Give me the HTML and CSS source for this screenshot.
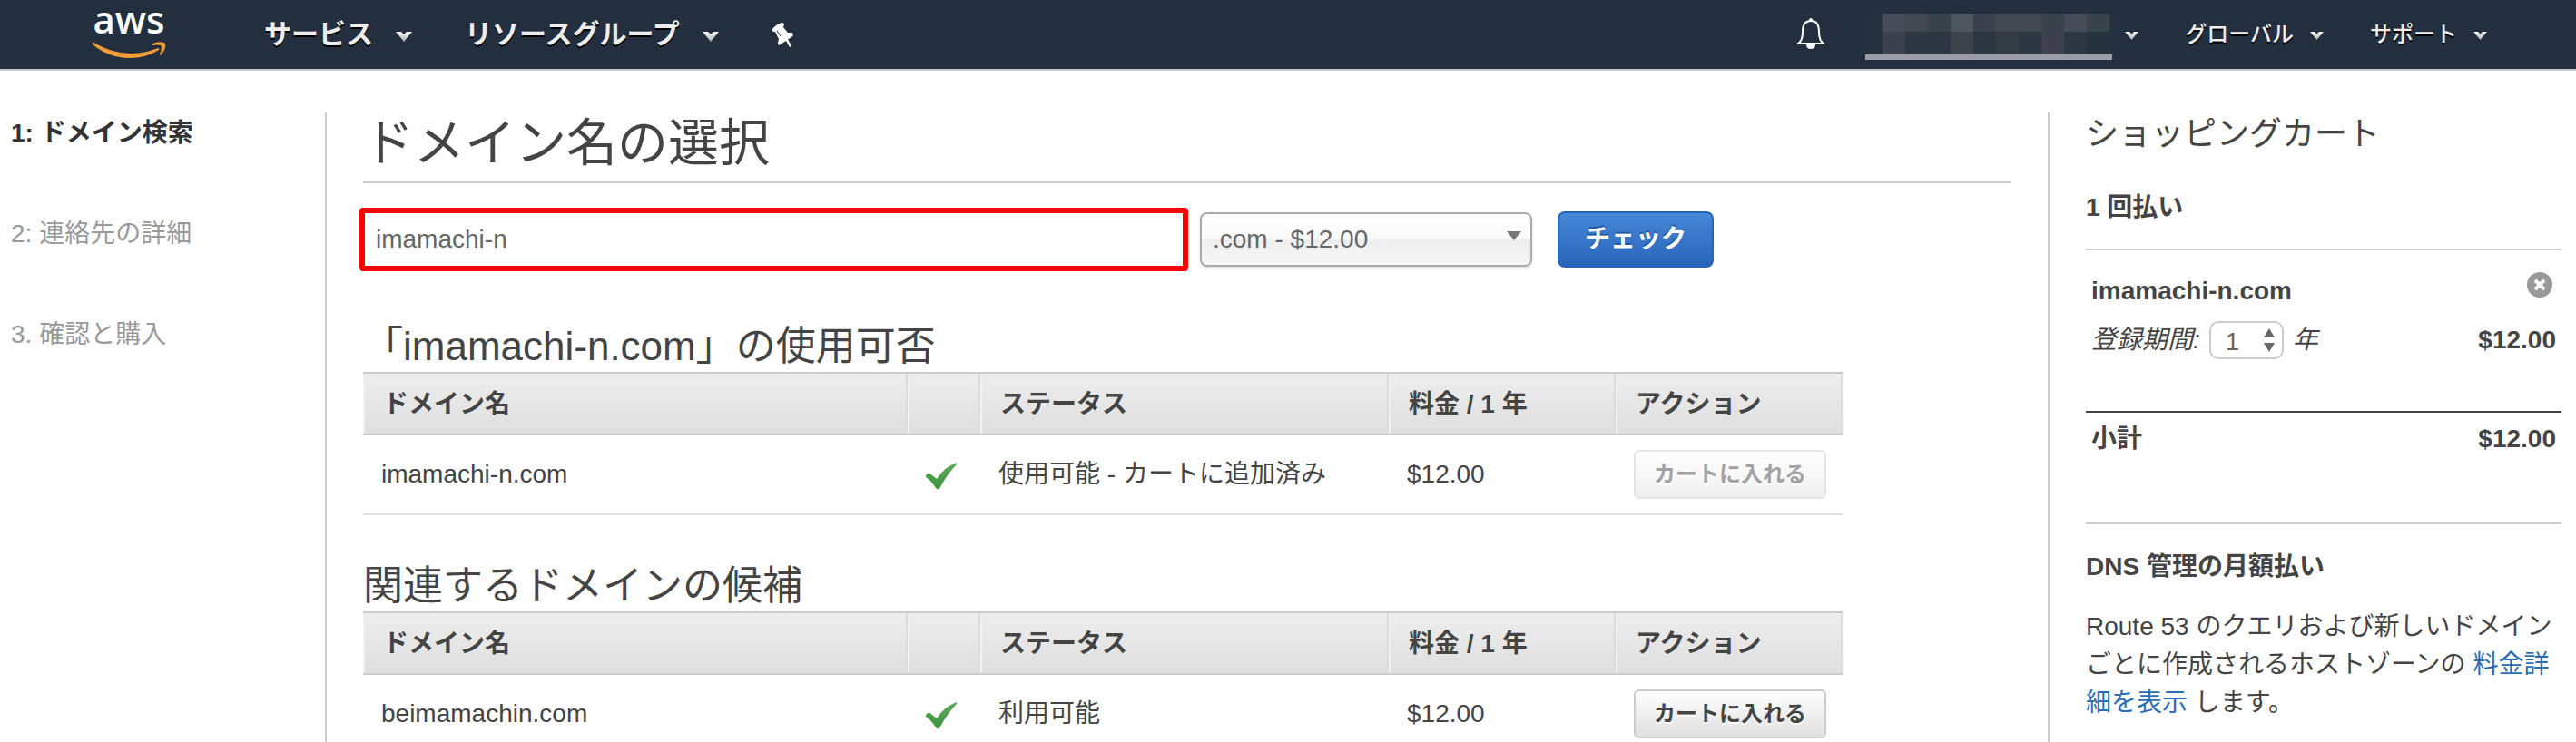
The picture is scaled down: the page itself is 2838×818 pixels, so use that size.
FILE: index.html
```html
<!DOCTYPE html>
<html lang="ja">
<head>
<meta charset="utf-8">
<title>ドメイン名の選択</title>
<link rel="stylesheet" href="styles.css">
</head>
<body>
<svg class="defs" aria-hidden="true">
  <linearGradient id="caret-fill" x1="0" y1="0" x2="0" y2="1"><stop offset="0" stop-color="#fff"/><stop offset="1" stop-color="#aaa"/></linearGradient>
  <linearGradient id="check-fill" x1="0" y1="0" x2="0" y2="1"><stop offset="0" stop-color="#5fa75f"/><stop offset="1" stop-color="#3b953b"/></linearGradient>
  <symbol id="caret" viewBox="0 0 18 11"><path d="M0 0H6L9 3L12 0H18L9 11Z" fill="url(#caret-fill)"/></symbol>
  <symbol id="check" viewBox="0 0 34 30"><path d="M0 14Q3 10 6 13L12 18Q20 5 34 0V2Q24 12 16 27Q14 31 11 28Q6 20 0 16Z" fill="url(#check-fill)"/></symbol>
</svg>
<header class="topbar">
  <a class="logo" href="#" aria-label="aws">
    <span class="logo-text">aws</span>
    <svg class="smile" viewBox="0 0 82 19"><path d="M1 1Q2 0 4 2Q38 21 73 7Q75 7 74 9Q60 18 42 18Q19 18 1 3Z" fill="#f29c38"/><path d="M67 2Q74-1 80 1Q84 6 76 15Q75 15 75 14Q78 6 76 4Q74 3 67 4Z" fill="#f29c38"/></svg>
  </a>
  <nav class="nav-main">
    <button class="nav-item">サービス<svg class="caret"><use href="#caret"/></svg></button>
    <button class="nav-item">リソースグループ<svg class="caret"><use href="#caret"/></svg></button>
    <button class="nav-item" aria-label="ピン留め"><svg class="pin" viewBox="0 0 24 27"><path d="M1 7Q5 2 11 0Q14 0 14 2L13 5L18 11L23 11L24 14Q22 17 18 18L22 26L20 27L16 20L8 25Q7 24 7 22L8 18L4 10L2 10Q0 9 1 7Z" fill="#fff"/><path d="M6 9L10 15" stroke="#232f3e" stroke-width="1"/></svg></button>
  </nav>
  <nav class="nav-side">
    <button class="nav-bell" aria-label="通知"><svg class="bell" viewBox="0 0 32 36"><path d="M2 28Q7 25 7 15Q7 3 16 3Q25 3 25 15Q25 25 30 28Z" fill="none" stroke="#fff" stroke-width="2"/><circle cx="16" cy="2" r="2" fill="#fff"/><path d="M11 29H21Q21 34 16 34Q11 34 11 29Z" fill="#fff"/></svg></button>
    <button class="nav-item nav-account" aria-label="アカウント">
      <svg class="mosaic" viewBox="0 0 272 51">
        <path fill="#27323f" d="M0 0H272V45H0Z"/>
        <path fill="#474d58" d="M19 0h25v20h-25zM219 0h25v20h-25z"/>
        <path fill="#434751" d="M44 0h25v20h-25zM144 0h25v20h-25zM169 0h25v20h-25z"/>
        <path fill="#39434c" d="M69 0h25v20h-25zM194 0h25v20h-25zM244 0h25v20h-25z"/>
        <path fill="#4e565f" d="M94 0h25v20h-25z"/>
        <path fill="#3d404d" d="M119 0h25v20h-25zM19 20h25v25h-25zM194 20h25v25h-25z"/>
        <path fill="#2d3743" d="M44 20h50v25h-50zM119 20h25v25h-25zM169 20h25v25h-25zM219 20h25v25h-25z"/>
        <path fill="#3c434b" d="M94 20h25v25h-25z"/>
        <path fill="#343d46" d="M144 20h25v25h-25z"/>
        <path fill="#9b9ca6" d="M0 45H272V51H0Z"/>
      </svg>
      <svg class="caret caret-small"><use href="#caret"/></svg>
    </button>
    <button class="nav-item nav-small">グローバル<svg class="caret caret-small"><use href="#caret"/></svg></button>
    <button class="nav-item nav-small">サポート<svg class="caret caret-small"><use href="#caret"/></svg></button>
  </nav>
</header>
<div class="page">
  <ol class="steps">
    <li class="step step-current">1: ドメイン検索</li>
    <li class="step">2: 連絡先の詳細</li>
    <li class="step">3. 確認と購入</li>
  </ol>
  <main class="main">
    <h1 class="title">ドメイン名の選択</h1>
    <form class="search">
      <input class="search-input" type="text" value="imamachi-n" aria-label="ドメイン名">
      <span class="stack">
        <select class="tld" aria-label="トップレベルドメイン"><option>.com - $12.00</option></select>
        <svg class="tld-arrow" viewBox="0 0 16 10"><path d="M0 0H16L8 10Z" fill="#777"/></svg>
      </span>
      <button class="primary" type="button">チェック</button>
    </form>
    <h2 class="section-title">「imamachi-n.com」の使用可否</h2>
    <table class="domains">
      <thead><tr><th class="col-name">ドメイン名</th><th class="col-icon"></th><th class="col-status">ステータス</th><th class="col-price">料金 / 1 年</th><th class="col-action">アクション</th></tr></thead>
      <tbody><tr><td>imamachi-n.com</td><td><svg class="check"><use href="#check"/></svg></td><td>使用可能 - カートに追加済み</td><td>$12.00</td><td><button class="add" disabled>カートに入れる</button></td></tr></tbody>
    </table>
    <h2 class="section-title">関連するドメインの候補</h2>
    <table class="domains">
      <thead><tr><th class="col-name">ドメイン名</th><th class="col-icon"></th><th class="col-status">ステータス</th><th class="col-price">料金 / 1 年</th><th class="col-action">アクション</th></tr></thead>
      <tbody><tr><td>beimamachin.com</td><td><svg class="check"><use href="#check"/></svg></td><td>利用可能</td><td>$12.00</td><td><button class="add">カートに入れる</button></td></tr></tbody>
    </table>
  </main>
  <aside class="cart">
    <h2 class="cart-title">ショッピングカート</h2>
    <h3 class="cart-heading">1 回払い</h3>
    <section class="cart-item">
      <div class="cart-row">
        <strong>imamachi-n.com</strong>
        <button class="remove" aria-label="削除"><svg class="remove-icon" viewBox="0 0 28 28"><circle cx="14" cy="14" r="14" fill="#999"/><path d="M9 9L19 19M19 9L9 19" stroke="#fff" stroke-width="4"/></svg></button>
      </div>
      <div class="cart-row">
        <span class="term">
          <label for="years">登録期間:</label>
          <span class="stack">
            <select class="years" id="years"><option>1</option></select>
            <svg class="years-arrow" viewBox="0 0 12 26"><path d="M0 10H12L6 0ZM0 16H12L6 26Z" fill="#666"/></svg>
          </span>
          <span>年</span>
        </span>
        <strong>$12.00</strong>
      </div>
    </section>
    <div class="cart-row subtotal"><strong>小計</strong><strong>$12.00</strong></div>
    <h3 class="cart-heading dns">DNS 管理の月額払い</h3>
    <p class="note">Route 53 のクエリおよび新しいドメインごとに作成されるホストゾーンの <a class="link" href="#">料金詳細を表示</a> します。</p>
  </aside>
</div>
</body>
</html>
```
FILE: styles.css
```css
* { box-sizing: border-box; }

body {
  margin: 0;
  height: 100vh;
  overflow: hidden;
  display: flex;
  flex-direction: column;
  background: #fff;
  color: #444;
  font: 28px/42px "Liberation Sans", "Noto Sans CJK JP", sans-serif;
}

h1, h2, h3, p, ol { margin: 0; padding: 0; font-weight: normal; }
button, input, select { font: inherit; color: inherit; margin: 0; }
svg { display: block; flex: none; }
.defs { position: absolute; width: 0; height: 0; }

/* top bar */
.topbar {
  display: flex;
  align-items: center;
  flex: none;
  height: 78px;
  padding: 0 98px 0 100px;
  background: #232f3e;
  border-bottom: 2px solid #c8c9ce;
}
.logo {
  width: 84px;
  margin-right: 107px;
  padding-bottom: 4px;
  display: flex;
  flex-direction: column;
  align-items: center;
  color: #fff;
  text-decoration: none;
}
.logo-text { font: 600 42px/56px "Open Sans", sans-serif; margin: -14px 0 -3px; }
.smile { width: 82px; height: 19px; }
.nav-main, .nav-side { display: flex; align-items: center; }
.nav-main { gap: 58px; }
.nav-side { gap: 51px; margin-left: auto; }
.nav-item, .nav-bell {
  display: flex;
  align-items: center;
  gap: 25px;
  padding: 0;
  border: 0;
  background: none;
  color: #eee;
  font-size: 30px;
  font-weight: bold;
  text-shadow: 0 2px 0 #000;
}
.nav-small { gap: 18px; font-size: 24px; font-weight: 500; }
.nav-account { gap: 14px; }
.nav-bell { margin-right: -7px; }
.caret { width: 18px; height: 11px; margin-top: 4px; }
.caret-small { width: 15px; height: 9px; margin-top: 2px; }
.pin { width: 24px; height: 27px; }
.bell { width: 32px; height: 36px; }
.mosaic { width: 272px; height: 51px; margin-top: 4px; }

/* page columns */
.page {
  flex: 1;
  display: grid;
  grid-template-columns: 358px 1fr 582px;
  padding-top: 46px;
}
.steps { list-style: none; padding: 2px 0 0 12px; display: flex; flex-direction: column; gap: 69px; }
.step { color: #999; }
.step-current { color: #333; font-weight: bold; }

.main { border-left: 2px solid #ccc; padding: 0 40px; }
.title {
  font-size: 56px;
  line-height: 64px;
  padding: 2px 0 10px;
  border-bottom: 2px solid #ccc;
}
.search {
  display: flex;
  align-items: center;
  margin: 27px 0 0 -4px;
  padding-bottom: 5px;
  color: #666;
}
.stack { display: inline-grid; align-items: center; justify-items: end; }
.stack > * { grid-area: 1 / 1; }
.search-input {
  width: 913px;
  height: 70px;
  padding: 0 12px;
  border: 6px solid #f00;
  border-radius: 4px;
  background: #fff;
  margin-right: 13px;
  outline: 0;
}
.tld {
  appearance: none;
  width: 366px;
  height: 60px;
  padding: 0 50px 0 12px;
  border: 2px solid #aaa;
  border-radius: 8px;
  background: linear-gradient(#fff 0%, #fafafa 48%, #eee 52%, #f8f8f8 100%);
  box-shadow: 0 2px 3px #ddd;
}
.tld-arrow { width: 16px; height: 10px; margin: 0 12px 8px 0; pointer-events: none; }
.primary {
  margin-left: 28px;
  padding: 8px 28px;
  border: 2px solid #2765b8;
  border-radius: 8px;
  background: linear-gradient(#4788d8, #2765b8);
  color: #fff;
  font-weight: bold;
  text-shadow: 0 -2px 0 #2458a0;
}

.section-title { font-size: 44px; line-height: 56px; padding-top: 2px; margin-top: 48px; }
.domains { width: 100%; max-width: 1630px; table-layout: fixed; border-collapse: separate; border-spacing: 0; }
.col-name { width: 600px; }
.col-icon { width: 80px; }
.col-status { width: 450px; }
.domains th {
  height: 70px;
  padding: 2px 22px 0;
  text-align: left;
  border: solid #ccc;
  border-width: 2px 0;
  background: linear-gradient(#ededed, #dfdfdf);
  box-shadow: inset 2px 0 #f2f2f2, inset -2px 0 #dcdcdc;
}
.domains td { height: 88px; padding: 0 18px 0 20px; border-bottom: 2px solid #ddd; }
.check { width: 34px; height: 30px; margin-top: 4px; }
.add {
  display: block;
  padding: 4px 20px;
  border: 2px solid #ccc;
  border-radius: 6px;
  background: linear-gradient(#fff, #e0e0e0);
  color: #444;
  font-size: 24px;
  font-weight: bold;
  white-space: nowrap;
  text-shadow: 0 2px 0 #fff;
}
.add:disabled { border-color: #e4e4e4; background: linear-gradient(#fff, #f0f0f0); color: #a2a2a2; }

/* cart */
.cart { border-left: 2px solid #ccc; padding: 2px 16px 0 40px; }
.cart-title { font-size: 36px; line-height: 44px; }
.cart-heading { font-size: 28px; font-weight: bold; margin-top: 38px; }
.cart-row { display: flex; justify-content: space-between; align-items: center; padding: 0 6px; }
.cart-item {
  display: grid;
  gap: 12px;
  margin-top: 24px;
  padding: 24px 0 57px;
  border: solid #ccc;
  border-width: 2px 0;
  border-bottom-color: #444;
}
.remove { padding: 0; border: 0; background: none; margin: 0 4px 14px 0; }
.remove-icon { width: 28px; height: 28px; }
.term { display: flex; align-items: center; gap: 10px; font-style: italic; }
.years {
  appearance: none;
  width: 82px;
  height: 42px;
  padding: 0 16px;
  border: 2px solid #ccc;
  border-radius: 10px;
  background: #fff;
  color: #666;
  font-style: normal;
}
.years-arrow { width: 12px; height: 26px; margin-right: 10px; pointer-events: none; }
.subtotal { padding: 8px 6px 71px; border-bottom: 2px solid #ccc; }
.dns { margin-top: 26px; }
.note { margin-top: 24px; }
.link { color: #2a6db5; text-decoration: none; }
```
